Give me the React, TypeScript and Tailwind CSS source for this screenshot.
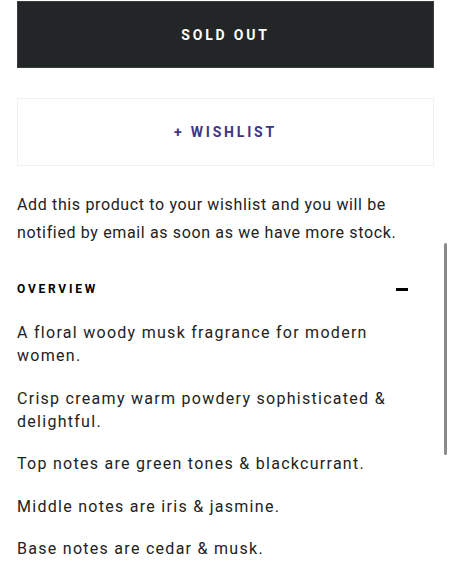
import React from 'react';

const notes = [
  'A floral woody musk fragrance for modern women.',
  'Crisp creamy warm powdery sophisticated & delightful.',
  'Top notes are green tones & blackcurrant.',
  'Middle notes are iris & jasmine.',
  'Base notes are cedar & musk.',
];

const App: React.FC = () => {
  return (
    <div className="relative h-[575px] w-[452px] overflow-hidden bg-white font-['Roboto',sans-serif] text-[#1c1c1c]">
      <div className="pl-[17px] pr-[18px] pt-px">
        {/* Buttons */}
        <button className="flex h-[67px] w-full items-center justify-center border border-[#3a3d3e] bg-[#232627] pt-[2px] text-[14px] font-bold tracking-[0.2em] text-white">
          SOLD OUT
        </button>
        <button className="mt-[30px] flex h-[68px] w-full items-center justify-center border border-[#f1f1f1] bg-white pt-[1px] text-[14px] font-bold tracking-[0.2em] text-[#3e3585]">
          + WISHLIST
        </button>

        <p className="mt-[25px] text-[16px] leading-[28px] tracking-[0.04em] text-[#222]">
          Add this product to your wishlist and you will be notified by email as soon as we have more stock.
        </p>

        {/* Overview accordion */}
        <div className="mt-[34px] flex items-center justify-between pr-[26px]">
          <h3 className="text-[12px] font-bold leading-[16px] tracking-[0.23em] text-black">OVERVIEW</h3>
          <span className="block h-[3px] w-[12px] bg-black" />
        </div>

        <div className="mt-[24px] flex flex-col gap-[19.5px] pr-[20px]">
          {notes.map((n) => (
            <p key={n} className="text-[16px] leading-[23px] tracking-[0.08em] text-[#222]">
              {n}
            </p>
          ))}
        </div>
      </div>

      {/* scrollbar */}
      <div className="absolute left-[444px] top-[243px] h-[212px] w-[3px] rounded-full bg-[#8a8a8a]" />
    </div>
  );
};

export default App;
